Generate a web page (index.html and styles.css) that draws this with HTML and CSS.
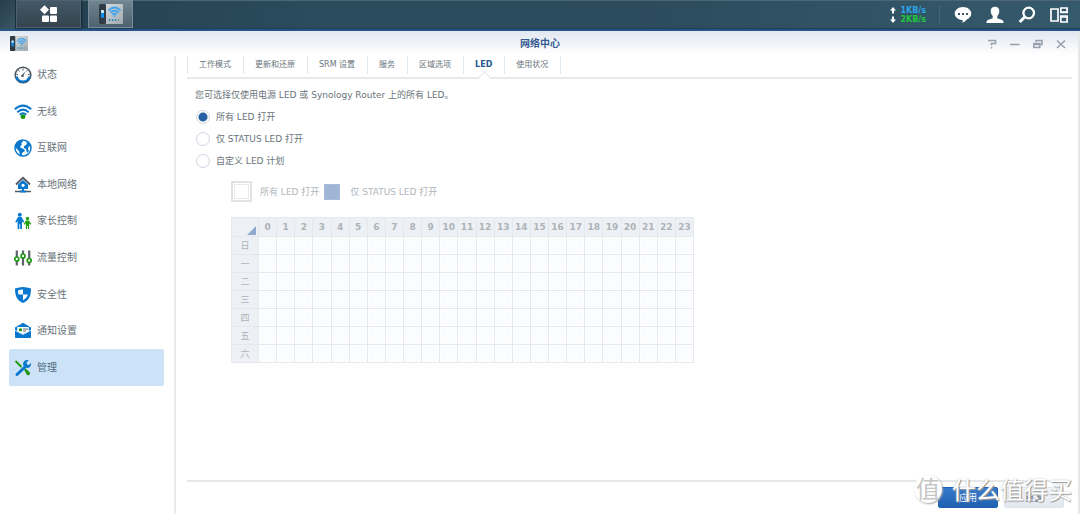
FILE: index.html
```html
<!DOCTYPE html>
<html lang="zh-CN">
<head>
<meta charset="utf-8">
<meta name="viewport" content="width=device-width, initial-scale=1">
<title>网络中心</title>
<link rel="stylesheet" href="styles.css">
</head>
<body>
<svg class="defs" aria-hidden="true">
  <defs>
    <linearGradient id="panel" x1="0" y1="0" x2="1" y2="1"><stop offset="0" stop-color="#dde2e5"/><stop offset="1" stop-color="#9fa9ae"/></linearGradient>
    <symbol id="router" viewBox="0 0 24 20">
      <rect x="0" y="0" width="24" height="20" rx="1" fill="url(#panel)"/>
      <rect x="0" y="0" width="7" height="20" rx="1" fill="#303b46"/>
      <rect x="2" y="6" width="3" height="8" rx="1" fill="#0d8ff5"/><rect x="2" y="6" width="3" height="3" rx="1" fill="#d5f1ff"/>
      <g fill="none" stroke="#42a3ee" stroke-width="1.800"><path d="M9.500 6.500q6-6 12 0"/><path d="M11.300 8.700q4.200-4.200 8.400 0"/><path d="M13.300 10.500q2.200-2 4.400 0"/></g>
      <circle cx="15.500" cy="12" r="1" fill="#42a3ee"/>
      <path d="M10.500 15v2m3-2v2m3-2v2" stroke="#258bb4" stroke-width="1.400"/><path d="M19.500 15v2" stroke="#78868c" stroke-width="1"/>
    </symbol>
  </defs>
</svg>
<div class="desktop">
  <header class="taskbar">
    <span class="taskbar-edge"></span>
    <button class="task menu" aria-label="主菜单"><svg width="18" height="18" viewBox="0 0 18 18" fill="#fff"><path d="M4.500.2 9 4.700 4.500 9.200 0 4.700z"/><rect x="10" y="2" width="7" height="7" rx="1"/><rect x="2" y="10.500" width="7" height="6.500" rx="1"/><rect x="10" y="10.500" width="7" height="6.500" rx="1"/></svg></button>
    <button class="task app" aria-label="网络中心"><svg width="24" height="20"><use href="#router"/></svg></button>
    <div class="tray">
      <div class="speed">
        <div class="up"><svg width="6" height="7" viewBox="0 0 6 7"><path d="M3 0 6 3.500H4V6.500H2V3.500H0z" fill="#fff"/></svg><span>1KB/s</span></div>
        <div class="down"><svg width="6" height="7" viewBox="0 0 6 7"><path d="M3 7 0 3.500H2V.5H4V3.500H6z" fill="#fff"/></svg><span>2KB/s</span></div>
      </div>
      <button class="tray-button" aria-label="通知"><svg width="18" height="18" viewBox="0 0 18 18"><path d="M9 1c4.600 0 8.300 2.900 8.300 6.600 0 2.700-1.900 4.900-4.600 6-.7 1.500-2.700 2.800-5 3.100.9-.8 1.200-1.600 1.100-2.500C4.300 14.100.7 11.200.7 7.600.7 3.900 4.400 1 9 1z" fill="#fff"/><path d="M4 7h2v2H4zm4 0h2v2H8zm4 0h2v2h-2z" fill="#36586c"/></svg></button>
      <button class="tray-button" aria-label="用户"><svg width="18" height="18" viewBox="0 0 18 18"><path d="M9 .7c2.700 0 4.400 1.700 4.300 4.400-.1 2.400-.9 3.800-2 5v2.100l4.900 1.800c1 .4 1.300 1.300 1.300 3H.5c0-1.700.3-2.600 1.300-3l4.900-1.800v-2.100c-1.100-1.200-1.900-2.600-2-5C4.600 2.400 6.300.7 9 .7z" fill="#fff"/></svg></button>
      <button class="tray-button" aria-label="搜索"><svg width="18" height="18" viewBox="0 0 18 18" fill="none" stroke="#fff"><circle cx="10.700" cy="7" r="5.300" stroke-width="2.300"/><path d="m6.700 11-5 5" stroke-width="3"/></svg></button>
      <button class="tray-button" aria-label="小工具"><svg width="18" height="18" viewBox="0 0 18 18" fill="none" stroke="#fff" stroke-width="1.700"><path d="M1 3h7v12H1zM10.800 2h6.300v4h-6.300zM10.800 10h6.300v6h-6.300z"/><path d="M10 6.500h8M10 11h8" stroke-width="1.500"/></svg></button>
    </div>
  </header>
  <div class="window">
    <div class="titlebar">
      <svg class="title-icon" width="18" height="15"><use href="#router"/></svg>
      <h1>网络中心</h1>
      <div class="window-controls">
        <button aria-label="帮助"><svg width="10" height="10" viewBox="0 0 10 10"><path d="M1 1.500h7.500v3H4.500v2M4.500 8v1.500"/></svg></button>
        <button aria-label="最小化"><svg width="10" height="10" viewBox="0 0 10 10"><path d="M0 5.500h9.500"/></svg></button>
        <button aria-label="还原"><svg width="10" height="10" viewBox="0 0 10 10"><path d="M3 3V1.500h6v4H7.500M.8 4.500h6v4h-6zM.8 5.500h6"/></svg></button>
        <button aria-label="关闭"><svg width="10" height="10" viewBox="0 0 10 10"><path d="m1 1.500 8 7.500M9 1.500 1 9"/></svg></button>
      </div>
    </div>
    <div class="body">
      <nav class="sidebar">
        <a href="#"><svg viewBox="0 0 18 18"><circle cx="9" cy="9" r="7.800" fill="#fff" stroke="#4c5560" stroke-width="1.600"/><path d="M2.500 10.500a6.700 6.700 0 0 0 13 0" fill="none" stroke="#0874cc" stroke-width="2.200"/><path d="M9 2.500v2M4.300 4.300l1.200 1.200M13.700 4.300l-1.200 1.200M2.500 8.500h1.500M14 8.500h1.500M8.500 10l2-3.500" stroke="#4c5560"/><circle cx="8.500" cy="9.800" r="1.300" fill="#4c5560"/></svg>状态</a>
        <a href="#"><svg viewBox="0 0 18 18"><g fill="none" stroke="#0878cf" stroke-width="2"><path d="M.8 6.300Q9-1 17.200 6.300"/><path d="M3.300 9.200Q9 4 14.700 9.200"/><path d="M5.700 11.800Q9 8.700 12.300 11.800"/></g><circle cx="9" cy="13.700" r="2.400" fill="#16970b"/></svg>无线</a>
        <a href="#"><svg viewBox="0 0 18 18"><circle cx="9" cy="9" r="8" fill="#fff" stroke="#0878cf" stroke-width="1.500"/><path d="M2 4 5 1.500 8 1l1 2-2 1 1 1-2 3 1 1 3 1 1 2-3 2v3l-2-1-1-4-3-3zM11 2l4 2 2 4-2-1-1 3 1 2-2 2-1-4-2-1V7l2-1 1-2z" fill="#0878cf"/></svg>互联网</a>
        <a href="#"><svg viewBox="0 0 18 18"><path d="M4 8.500 9 4l5 4.500V13H4z" fill="#0878cf"/><path d="m2 8.500 7-6.700 7 6.700" fill="none" stroke="#505963" stroke-width="1.800"/><circle cx="9" cy="9.300" r="1.600" fill="#fff"/><path d="M1 15.500h16" stroke="#505963" stroke-width="1.500"/><path d="M6 14.500h6v2H6zM8 12h2v4H8z" fill="#0878cf"/></svg>本地网络</a>
        <a href="#"><svg viewBox="0 0 18 18"><circle cx="5.800" cy="2.800" r="2" fill="#0878cf"/><path d="M4 5h3.600l2.800 5-1.300.8L8 9v8H6.200v-5h-.8v5H3.600V9l-1.100 1.800L1.200 10z" fill="#0878cf"/><circle cx="13.500" cy="6.500" r="1.700" fill="#229f13"/><path d="M12 8.500h3l2.300 3.500-1 .8-1.200-1.500V17h-1.200v-3h-.8v3h-1.200v-5.700l-1.200 1.500-1-.8z" fill="#229f13"/></svg>家长控制</a>
        <a href="#"><svg viewBox="0 0 18 18"><path d="M2.800 1.500v15M9 1.500v15M15.200 1.500v15" stroke="#59626c" stroke-width="2.200"/><g fill="#fff" stroke="#219a13" stroke-width="1.700"><circle cx="2.800" cy="10" r="2"/><circle cx="9" cy="7" r="2"/><circle cx="15.200" cy="11.500" r="2"/></g></svg>流量控制</a>
        <a href="#"><svg viewBox="0 0 18 18"><path d="M1 2.500Q9-.5 17 2.500C17 10 15 14.500 9 17 3 14.500 1 10 1 2.500z" fill="#0878cf"/><path d="M4 4.500Q6.500 3.500 9 3.500V8.500H4.500Q4 7 4 4.500zM9 8.500H13.800Q13 12 9 14.200z" fill="#fff"/></svg>安全性</a>
        <a href="#"><svg viewBox="0 0 18 18"><path d="M1 5.500 9 .8l8 4.700V15q0 1-1 1H2q-1 0-1-1z" fill="#0878cf"/><path d="M3.200 5h11.600v4.500L9 12 3.200 9.500z" fill="#fff"/><path d="M5 6.500h3v2.700H5z" fill="#209613"/><path d="M9 7h5M9 9h3" stroke="#606b74" stroke-width="1"/><path d="m1 8.200 8 4.300 8-4.300" fill="none" stroke="#fff" stroke-width=".8"/></svg>通知设置</a>
        <a href="#" class="current" aria-current="page"><svg viewBox="0 0 18 18"><path d="m1.500 2 6 6" stroke="#209613" stroke-width="1.800"/><path d="m10 10.500 1.200-1.200 4.300 3.700q1.200 1.500 0 2.700t-2.700 0z" fill="#209613"/><path d="M3 15.500 11 8" stroke="#0878cf" stroke-width="3" stroke-linecap="round"/><path d="M14.700 1.200 12.500 3.500l.5 2 2 .5 2-2.300q.7 3-1.400 4.500-1.500 1.200-4 .4L9.200 6.400q-.7-2.400.8-4 1.700-1.900 4.700-1.200z" fill="#0878cf"/></svg>管理</a>
      </nav>
      <main class="main">
        <nav class="tabs">
          <a href="#">工作模式</a><a href="#">更新和还原</a><a href="#">SRM 设置</a><a href="#">服务</a><a href="#">区域选项</a><a href="#" class="active" aria-current="page">LED</a><a href="#">使用状况</a>
        </nav>
        <form class="content">
          <p>您可选择仅使用电源 LED 或 Synology Router 上的所有 LED。</p>
          <div class="options">
            <label><input type="radio" name="led" checked>所有 LED 打开</label>
            <label><input type="radio" name="led">仅 STATUS LED 打开</label>
            <label><input type="radio" name="led">自定义 LED 计划</label>
          </div>
          <div class="schedule">
            <div class="legend">
              <button type="button" class="choice" aria-label="所有 LED 打开" disabled></button><span>所有 LED 打开</span>
              <button type="button" class="choice status" aria-label="仅 STATUS LED 打开" disabled></button><span>仅 STATUS LED 打开</span>
            </div>
            <table>
              <thead><tr><th class="corner"><svg width="9" height="9" viewBox="0 0 9 9"><path d="M9 0v9H0z" fill="#91abcc"/></svg></th><th>0</th><th>1</th><th>2</th><th>3</th><th>4</th><th>5</th><th>6</th><th>7</th><th>8</th><th>9</th><th>10</th><th>11</th><th>12</th><th>13</th><th>14</th><th>15</th><th>16</th><th>17</th><th>18</th><th>19</th><th>20</th><th>21</th><th>22</th><th>23</th></tr></thead>
              <tbody>
                <tr><th>日</th><td></td><td></td><td></td><td></td><td></td><td></td><td></td><td></td><td></td><td></td><td></td><td></td><td></td><td></td><td></td><td></td><td></td><td></td><td></td><td></td><td></td><td></td><td></td><td></td></tr>
                <tr><th>一</th><td></td><td></td><td></td><td></td><td></td><td></td><td></td><td></td><td></td><td></td><td></td><td></td><td></td><td></td><td></td><td></td><td></td><td></td><td></td><td></td><td></td><td></td><td></td><td></td></tr>
                <tr><th>二</th><td></td><td></td><td></td><td></td><td></td><td></td><td></td><td></td><td></td><td></td><td></td><td></td><td></td><td></td><td></td><td></td><td></td><td></td><td></td><td></td><td></td><td></td><td></td><td></td></tr>
                <tr><th>三</th><td></td><td></td><td></td><td></td><td></td><td></td><td></td><td></td><td></td><td></td><td></td><td></td><td></td><td></td><td></td><td></td><td></td><td></td><td></td><td></td><td></td><td></td><td></td><td></td></tr>
                <tr><th>四</th><td></td><td></td><td></td><td></td><td></td><td></td><td></td><td></td><td></td><td></td><td></td><td></td><td></td><td></td><td></td><td></td><td></td><td></td><td></td><td></td><td></td><td></td><td></td><td></td></tr>
                <tr><th>五</th><td></td><td></td><td></td><td></td><td></td><td></td><td></td><td></td><td></td><td></td><td></td><td></td><td></td><td></td><td></td><td></td><td></td><td></td><td></td><td></td><td></td><td></td><td></td><td></td></tr>
                <tr><th>六</th><td></td><td></td><td></td><td></td><td></td><td></td><td></td><td></td><td></td><td></td><td></td><td></td><td></td><td></td><td></td><td></td><td></td><td></td><td></td><td></td><td></td><td></td><td></td><td></td></tr>
              </tbody>
            </table>
          </div>
        </form>
        <footer class="actions">
          <button type="button" class="primary">应用</button>
          <button type="button">重置</button>
          <div class="watermark"><span class="seal">值</span><span>什么值得买</span></div>
        </footer>
      </main>
    </div>
  </div>
</div>
</body>
</html>
```
FILE: styles.css
```css
* { box-sizing: border-box; }
body {
  margin: 0;
  font: 9px/16px "DejaVu Sans", "Noto Sans CJK SC", sans-serif;
  color: #69737a;
}
button { border: 0; padding: 0; font: inherit; background: none; }
a { color: inherit; text-decoration: none; }
svg { display: block; flex: none; }
.defs { position: absolute; width: 0; height: 0; }
.desktop { min-height: 100vh; display: flex; flex-direction: column; }

.taskbar {
  display: flex;
  height: 31px;
  border-bottom: 2px solid #275388;
  background: linear-gradient(90deg, #243f50, #2a4c5c 30%, #2c4c5d 60%, #355a6c);
  box-shadow: inset 0 1px #4c6675, inset 0 -1px #233e51;
}
.taskbar-edge { width: 16px; background: linear-gradient(135deg, #263d4c, #3a5666); border-right: 1px solid #1d303e; }
.task { display: flex; align-items: center; justify-content: center; height: 28px; }
.menu { width: 65px; border: 1px solid #4c6070; background: linear-gradient(#455867, #34444f); box-shadow: 1px 0 2px #15232e; }
.app { width: 45px; margin-left: 7px; border: 1px solid #7b8d98; background: linear-gradient(#71848f, #4c626e); }
.tray { margin-left: auto; padding-right: 12px; display: flex; align-items: center; gap: 14px; }
.tray-button { width: 18px; height: 18px; }
.speed {
  padding-right: 13px;
  border-right: 1px solid #456574;
  font: bold 8px/9px "DejaVu Sans", sans-serif;
}
.speed div { display: flex; align-items: center; gap: 4px; }
.up { color: #2fa4e7; }
.down { color: #20c63e; }

.window { flex: 1; display: flex; flex-direction: column; background: #fff; border-right: 2px solid #e5e7e9; }
.titlebar {
  height: 25px;
  display: grid;
  grid-template-columns: 1fr auto 1fr;
  align-items: center;
  padding: 0 12px 0 10px;
  background: linear-gradient(#e1e7f1, #fff 95%);
}
h1 { margin: 0; padding-left: 4px; font-size: 10px; line-height: 16px; color: #355a91; }
.window-controls { display: flex; justify-content: flex-end; gap: 13px; }
.window-controls button { width: 10px; height: 10px; }
.window-controls path { fill: none; stroke: #969fac; stroke-width: 1.5; }

.body { flex: 1; display: flex; }
.sidebar {
  width: 176px;
  padding: 1px 10px 128px 9px;
  border-right: 2px solid #ebebed;
  display: grid;
  grid-template-rows: repeat(9, 1fr);
}
.sidebar a { display: flex; align-items: center; gap: 5px; padding-left: 5px; border-radius: 2px; font-size: 10px; }
.sidebar svg { width: 18px; height: 18px; }
.sidebar .current { background: #cce3f7; color: #506b82; }

.main { flex: 1; min-width: 0; display: flex; flex-direction: column; padding: 0 6px 0 11px; }
.tabs { display: flex; height: 23px; border-bottom: 2px solid #e6e8e9; font-size: 8px; }
.tabs a { height: 18px; line-height: 18px; padding: 0 12px 0 11px; border-right: 1px solid #e0e8f0; position: relative; }
.tabs a:first-child { border-left: 1px solid #e0e8f0; }
.tabs .active { color: #275894; font-weight: bold; }
.tabs .active::after {
  content: "";
  position: absolute;
  left: calc(50% - 4px);
  bottom: -8px;
  width: 8px;
  height: 8px;
  border: solid #e0e3e5;
  border-width: 1px 0 0 1px;
  background: #fff;
  transform: rotate(45deg);
}
.content { flex: 1; padding: 8px; }
p { margin: 0; }
.options { display: grid; gap: 6px; padding-top: 6px; }
.options label { display: flex; align-items: center; gap: 6px; }
.options input {
  appearance: none;
  width: 14px;
  height: 14px;
  margin: 0 0 0 1px;
  border: 1px solid #ced7e2;
  border-radius: 50%;
  background: #fff;
}
.options input:checked { background: radial-gradient(circle, #2860a3 0 4px, #fff 5px); }
.schedule { padding: 12px 0 0 36px; }
.legend { display: flex; align-items: center; color: #b1b6ba; }
.choice { width: 21px; height: 21px; margin-right: 8px; border: 2px solid #dfe3e6; box-shadow: inset 0 0 0 1px #fff, inset 0 0 0 2px #e7eaed; }
.status { width: 16px; height: 16px; margin: 0 10px 0 5px; border: 1px solid #a9bddb; background: #9fb5d4; box-shadow: none; }
table { width: 463px; margin-top: 15px; border-collapse: collapse; table-layout: fixed; color: #aeb3b7; font-size: 9px; line-height: 16px; }
th, td { height: 18px; padding: 0; border: 1px solid #e5e8ec; }
td { background: #fbfcfd; box-shadow: inset 0 0 0 1px #fff; }
th { background: #edf1f5; }
thead th { height: 19px; }
tbody th { font-weight: normal; }
.corner { width: 27px; }
.corner svg { margin: 6px 2px 0 auto; }

.actions { position: relative; display: flex; justify-content: flex-end; gap: 6px; height: 34px; padding: 5px 8px 0 0; border-top: 2px solid #e5e7e9; }
.actions button { width: 60px; height: 21px; border: 1px solid #dce3eb; border-radius: 2px; background: linear-gradient(#f2f5f9, #e2e8ef); color: #58636c; }
.actions .primary { border-color: #1e60b1; background: linear-gradient(#367acb, #1e60b1); color: #fff; }
.watermark {
  position: absolute;
  right: 0;
  top: -8px;
  display: flex;
  align-items: center;
  gap: 10px;
  white-space: nowrap;
  font: 24px/30px "Noto Sans CJK SC", sans-serif;
  color: #fff;
  text-shadow: 1px 1px 1px #999, 0 0 2px #bbb;
  pointer-events: none;
}
.seal { width: 28px; height: 28px; border-radius: 50%; line-height: 26px; text-align: center; background: #fff; color: #c6c6c6; text-shadow: none; box-shadow: 1px 1px 2px #aaa; }
```
